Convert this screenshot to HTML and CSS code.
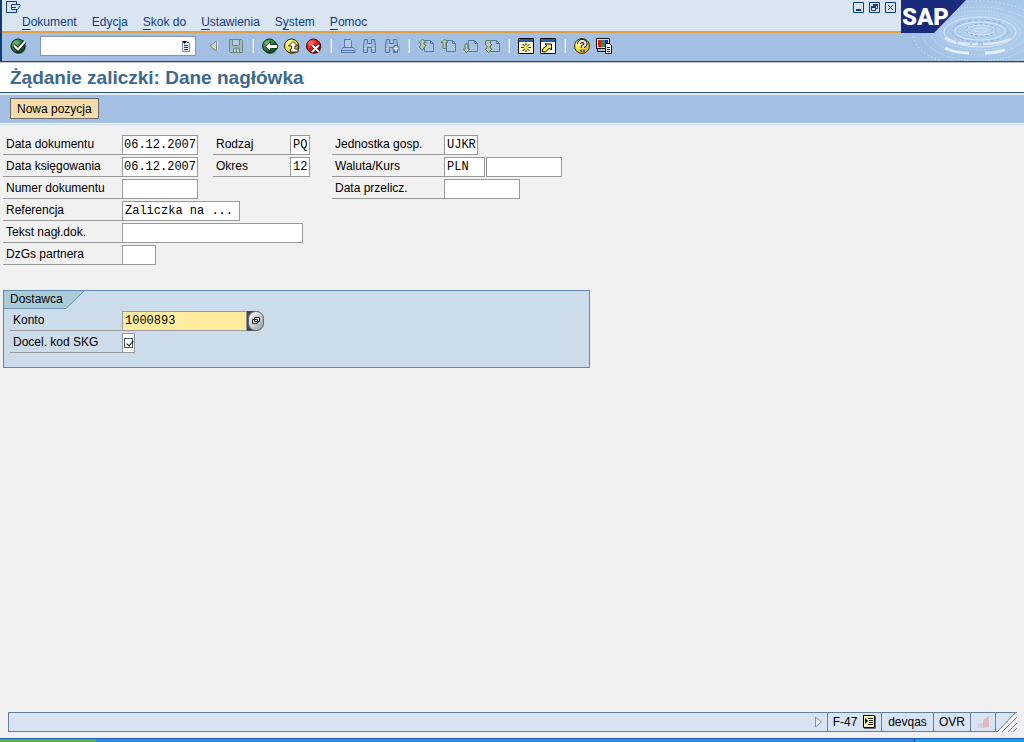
FILE: index.html
```
<!DOCTYPE html>
<html lang="pl">
<head>
<meta charset="utf-8">
<title>Żądanie zaliczki: Dane nagłówka</title>
<link rel="stylesheet" href="styles.css">
</head>
<body>
<svg class="defs" aria-hidden="true">
  <defs>
    <radialGradient id="green" cx=".35" cy=".3" r=".8"><stop offset="0" stop-color="#7dbb74"/><stop offset=".5" stop-color="#2a8040"/><stop offset="1" stop-color="#0d4020"/></radialGradient>
    <radialGradient id="yellow" cx=".35" cy=".3" r=".8"><stop offset="0" stop-color="#fffbb0"/><stop offset=".5" stop-color="#f8e23c"/><stop offset="1" stop-color="#e0a018"/></radialGradient>
    <radialGradient id="red" cx=".35" cy=".3" r=".8"><stop offset="0" stop-color="#ff7a70"/><stop offset=".5" stop-color="#e8141c"/><stop offset="1" stop-color="#b00010"/></radialGradient>
    <symbol id="page" viewBox="0 0 16 16"><path d="M6.500 2.500h6l3 3v8h-9z" fill="#a9c3e0" stroke="#587aa8"/><path d="M12.500 2.500v3h3" fill="none" stroke="#587aa8"/></symbol>
    <symbol id="binoculars" viewBox="0 0 16 16"><path d="M2.500 1.500h3v4h4v-4h3l1 6v7h-4v-5h-4v5h-4v-7z" fill="#9fbbe0" stroke="#5574aa"/><path d="M6 7.500h3M2 10.500h3M10 10.500h3" stroke="#c9daf0"/></symbol>
  </defs>
</svg>

<header class="top">
  <div class="bars">
    <div class="menubar">
      <div class="menu-left">
        <button class="sysmenu" aria-label="Menu okna"><svg width="16" height="12" viewBox="0 0 16 12"><path d="M10.500 3V.5H.5v11h10V9M14 3.500H5.500v5h6l3-4M5 6.500h5" fill="none" stroke="#0f3c80"/></svg></button>
        <nav class="menus">
          <button><u>D</u>okument</button><button>Edyc<u>j</u>a</button><button><u>S</u>kok do</button><button><u>U</u>stawienia</button><button>S<u>y</u>stem</button><button><u>P</u>omoc</button>
        </nav>
      </div>
      <div class="winbtns">
        <button aria-label="Minimalizuj"><svg width="11" height="11"><path d="M.5.5h10v10H.5z" fill="none" stroke="#0f3c80"/><path d="M3 8h5" stroke="#0f3c80" stroke-width="2"/></svg></button>
        <button aria-label="Przywróć"><svg width="11" height="11"><path d="M.5.5h10v10H.5zM4.500 4V2.500h4v4H7M2.500 4.500h4v4h-4z" fill="none" stroke="#0f3c80"/><path d="M4 3h5M2 5h5" stroke="#0f3c80" stroke-width="2"/></svg></button>
        <button aria-label="Zamknij"><svg width="11" height="11"><path d="M.5.5h10v10H.5zM3 3l5 5M8 3l-5 5" fill="none" stroke="#0f3c80"/></svg></button>
      </div>
    </div>
    <div class="toolbar">
      <button class="tool enter" aria-label="Enter"><svg width="18" height="18" viewBox="0 0 18 18"><circle cx="9" cy="10" r="7" fill="#5b7395"/><circle cx="8" cy="9" r="7" fill="url(#green)" stroke="#0a2c14"/><path d="M4 8.500l4 4 7-8" fill="none" stroke="#111" stroke-width="4"/><path d="M4 8.500l4 4 7-8" fill="none" stroke="#fff" stroke-width="2"/></svg></button>
      <div class="command">
        <input type="text" aria-label="Kod transakcji">
        <button aria-label="Historia"><svg width="10" height="12" viewBox="0 0 10 12"><path d="M1.500 2v9.500h7V3" fill="#e8eef8" stroke="#7d8eaa"/><path d="M1 1h5L3.500 4z" fill="#000"/><path d="M6 2.500h2M3 5.500h4M3 7.500h4M3 9.500h4" stroke="#20355c"/></svg></button>
      </div>
      <button class="tool" aria-label="Zwiń"><svg width="16" height="16"><path d="M10.500 3v10L4 8z" fill="#d5dac8" stroke="#7a8880"/><path d="M11.500 3v10" stroke="#fff"/></svg></button>
      <button class="tool" aria-label="Zapisz"><svg width="16" height="16"><path d="M1.500 1.500h12l1 1v12h-12l-1-1z" fill="#a5bcc5" stroke="#6a8480"/><path d="M4.500 1.500h7v6h-7zM5.500 14v-4h6v4M8.500 10v4" fill="#b7cbdc" stroke="#6a8480"/></svg></button>
      <span class="sep"></span>
      <button class="tool" aria-label="Wstecz"><svg width="16" height="16"><circle cx="8.500" cy="9" r="7" fill="#5b7395"/><circle cx="7.500" cy="8" r="7" fill="url(#green)" stroke="#0a2c14"/><path d="M3.500 8.500l5-5v3h7v4h-7v3z" fill="#fff" stroke="#123a1d"/></svg></button>
      <button class="tool" aria-label="Zakończ"><svg width="16" height="16"><circle cx="8.500" cy="9" r="7" fill="#66738b"/><circle cx="7.500" cy="8" r="7" fill="url(#yellow)" stroke="#2b220a"/><path d="M9 3.500l4.500 4.500H11v3h3v3H6.500v-3h1V8H4.500z" fill="#fff" stroke="#403000"/></svg></button>
      <button class="tool" aria-label="Anuluj"><svg width="16" height="16"><circle cx="8.500" cy="9" r="7" fill="#66738b"/><circle cx="7.500" cy="8" r="7" fill="url(#red)" stroke="#3c0306"/><path d="M6 7l7 7M13 7l-7 7" stroke="#40070a" stroke-width="3.500"/><path d="M6 7l7 7M13 7l-7 7" stroke="#fff" stroke-width="2"/></svg></button>
      <span class="sep"></span>
      <button class="tool" aria-label="Drukuj"><svg width="16" height="16"><path d="M4.500 1.500h6l1 1v7h-7z" fill="#b4cae8" stroke="#587aae"/><path d="M3 9.500h10l2 2v3H1.500v-3z" fill="#a9c2e4" stroke="#587aae"/><path d="M2 12.500h12" stroke="#587aae"/></svg></button>
      <button class="tool" aria-label="Szukaj"><svg width="16" height="16"><use href="#binoculars"/></svg></button>
      <button class="tool" aria-label="Szukaj dalej"><svg width="16" height="16"><use href="#binoculars"/><path d="M12 7v7M8.500 10.500h7" stroke="#5574aa" stroke-width="4"/><path d="M12 8v5M9.500 10.500h5" stroke="#dbe6f6" stroke-width="2"/></svg></button>
      <span class="sep"></span>
      <button class="tool" aria-label="Pierwsza strona"><svg width="16" height="16"><use href="#page"/><path d="M4.500 1l3.500 3.500H6V6l2 1-3.500 5L1 9l2-1.500V6L1 4.500z" fill="#b6c8b8" stroke="#64805f"/></svg></button>
      <button class="tool" aria-label="Poprzednia strona"><svg width="16" height="16"><use href="#page"/><path d="M4.500 1L8 4.500H6v6H3v-6H1z" fill="#b6c8b8" stroke="#64805f"/></svg></button>
      <button class="tool" aria-label="Następna strona"><svg width="16" height="16"><use href="#page"/><path d="M4.500 14.500L8 11H6V6H3v5H1z" fill="#b6c8b8" stroke="#64805f"/></svg></button>
      <button class="tool" aria-label="Ostatnia strona"><svg width="16" height="16"><use href="#page"/><path d="M2 2.500h5L6 5l2 2-2 1v2l2 1-3.500 3.500L1 11l2-1V8L1 6z" fill="#b6c8b8" stroke="#64805f"/></svg></button>
      <span class="sep"></span>
      <button class="tool" aria-label="Nowy tryb"><svg width="16" height="16"><path d="M.5.5h15v15H.5z" fill="#fffbd0" stroke="#000"/><path d="M1 1h14v3H1z" fill="#1f5fa5"/><path d="M8 5v9M3 9.500h10M4.500 6l7 7M11.500 6l-7 7" stroke="#222"/><path d="M8 7v5M5.500 9.500h5" stroke="#ffe82c" stroke-width="2"/></svg></button>
      <button class="tool" aria-label="Utwórz skrót"><svg width="16" height="16"><path d="M.5.5h15v15H.5z" fill="#fff" stroke="#000"/><path d="M1 1h14v3H1z" fill="#1f5fa5"/><path d="M2 13.500l1-3 4-3-2-1.500h6.500v6L9.500 10l-4 4z" fill="#fff04a" stroke="#000"/></svg></button>
      <span class="sep"></span>
      <button class="tool" aria-label="Pomoc"><svg width="16" height="16"><circle cx="8" cy="8" r="7.500" fill="url(#yellow)" stroke="#3b2d00"/><path d="M5 6c0-4 6.500-4 6.500 0C11.500 8 8.500 7.500 8.500 10M8.500 11.500v2.500" fill="none" stroke="#000" stroke-width="4"/><path d="M5 6c0-4 6.500-4 6.500 0C11.500 8 8.500 7.500 8.500 10M8.500 11.500v2" fill="none" stroke="#fff" stroke-width="2"/></svg></button>
      <button class="tool" aria-label="Dostosuj układ"><svg width="16" height="16"><path d="M.5.5h13v10H.5z" fill="#ddd" stroke="#111"/><path d="M2 2h3.500v7H2z" fill="#e01818"/><path d="M5 2h3.500v7H5z" fill="#10a040"/><path d="M8.500 2H12v7H8.500z" fill="#1830c8"/><path d="M1.500 11v2.500h8" fill="none" stroke="#111"/><path d="M9.500 5.500h4l2 2v8h-6z" fill="#fff" stroke="#000"/><path d="M11 9.500h3M11 11.500h3M11 13.500h3" stroke="#222"/></svg></button>
    </div>
  </div>
  <svg class="brand" width="123" height="61" viewBox="0 0 123 61" role="img" aria-label="SAP">
    <defs>
      <linearGradient id="water"><stop offset="0" stop-color="#a1bfe3"/><stop offset="1" stop-color="#a8c8ea"/></linearGradient>
      <radialGradient id="glow" cx=".65" cy=".5" r=".5"><stop offset="0" stop-color="#b8d3f0"/><stop offset="1" stop-color="#b8d3f0" stop-opacity="0"/></radialGradient>
    </defs>
    <rect width="123" height="61" fill="url(#water)"/>
    <rect width="123" height="61" fill="url(#glow)"/>
    <g fill="none" stroke="#dbe9f9">
      <ellipse cx="80" cy="30" rx="7" ry="2"/><ellipse cx="80" cy="30" rx="15" ry="5"/><ellipse cx="80" cy="30" rx="15" ry="6" stroke="#8fb0d8" stroke-dasharray="3 2"/>
      <ellipse cx="79" cy="31" rx="25" ry="9"/><ellipse cx="79" cy="31" rx="28" ry="11" stroke="#93b4db" stroke-dasharray="4 2"/>
      <ellipse cx="79" cy="32" rx="36" ry="15"/><ellipse cx="79" cy="32" rx="40" ry="18" stroke="#c9def4" stroke-dasharray="1 1"/>
      <ellipse cx="78" cy="33" rx="47" ry="22" stroke-dasharray="1 2"/><ellipse cx="78" cy="34" rx="56" ry="27" stroke-dasharray="1 2"/>
      <ellipse cx="78" cy="34" rx="66" ry="33" stroke-dasharray="1 3"/>
      <path d="M44 38q10 7 33 6" stroke-width="3" stroke-dasharray="12 2"/>
      <path d="M82 44q16 0 27-5" stroke-width="2"/>
      <path d="M44 48q10 5 24 5M84 53q10 0 20-3" stroke="#e4effb" stroke-width="3"/>
    </g>
    <path d="M0 0h65L33 33H0z" fill="#1b2b7c"/>
    <text class="logo" x="1" y="25">SAP</text>
  </svg>
</header>

<h1 class="title">Żądanie zaliczki: Dane nagłówka</h1>
<div class="appbar"><button>Nowa pozycja</button></div>

<main>
  <form class="header-form">
    <div class="field c1"><label for="bldat">Data dokumentu</label><input id="bldat" class="w-date" value="06.12.2007"></div>
    <div class="field c2"><label for="blart">Rodzaj</label><input id="blart" class="w-2" value="PQ"></div>
    <div class="field c3"><label for="bukrs">Jednostka gosp.</label><input id="bukrs" class="w-4" value="UJKR"></div>
    <div class="field c1"><label for="budat">Data księgowania</label><input id="budat" class="w-date" value="06.12.2007"></div>
    <div class="field c2"><label for="monat">Okres</label><input id="monat" class="w-2" value="12"></div>
    <div class="field c3"><label for="waers">Waluta/Kurs</label><input id="waers" class="w-5" value="PLN"><input class="w-date" aria-label="Kurs"></div>
    <div class="field c1"><label for="belnr">Numer dokumentu</label><input id="belnr" class="w-date"></div>
    <div class="field c3"><label for="wwert">Data przelicz.</label><input id="wwert" class="w-date"></div>
    <div class="field c1"><label for="xblnr">Referencja</label><input id="xblnr" class="w-ref" value="Zaliczka na ..."></div>
    <div class="field c1"><label for="bktxt">Tekst nagł.dok.</label><input id="bktxt" class="w-text"></div>
    <div class="field c1"><label for="pargb">DzGs partnera</label><input id="pargb" class="w-4"></div>
  </form>

  <section class="group">
    <h2><svg width="80" height="18" viewBox="0 0 80 18" aria-hidden="true"><path d="M0 0h80L62 17.500H0z" fill="#a9ccd8"/><path d="M80 0L62 17.500H0" fill="none" stroke="#6e94b0"/></svg><span>Dostawca</span></h2>
    <div class="group-rows">
      <div class="field"><label for="konto">Konto</label><input id="konto" class="w-acc" value="1000893"><button type="button" class="match" aria-label="Lista wartości"><svg width="17" height="20" viewBox="0 0 17 20"><defs><linearGradient id="knob" x2="1" y2="1"><stop offset="0" stop-color="#fff"/><stop offset="1" stop-color="#949aa2"/></linearGradient></defs><path d="M0 0h9v20H0z" fill="#404850"/><rect x="1.500" y=".5" width="15" height="19" rx="7" fill="url(#knob)" stroke="#596069"/><path d="M7.500 6.500h5v4h-5zM5.500 8.500h5v4h-5z" fill="#eef1f5" stroke="#222"/></svg></button></div>
      <div class="field"><label for="umskz">Docel. kod SKG</label><span class="check"><input id="umskz" type="checkbox" checked></span></div>
    </div>
  </section>
</main>

<footer class="status">
  <div class="message"><svg width="9" height="12"><path d="M1.500 1v10l6-5z" fill="#f4f8fd" stroke="#7d91ab"/></svg></div>
  <div class="cell tcode">F-47 <button aria-label="Informacje o systemie"><svg width="13" height="14"><path d="M.5.5h11v12H.5z" fill="#fbf7b4" stroke="#000"/><path d="M2 3l3 3-3 3z"/><path d="M5 3.500h5M6 5.500h4M6 7.500h4M5 9.500h5" stroke="#222"/><path d="M12.500 1v12.500H1" fill="none" stroke="#667"/></svg></button></div>
  <div class="cell server">devqas</div>
  <div class="cell mode">OVR</div>
  <div class="cell traffic"><svg width="13" height="14"><path d="M1 9l5-1v5H1z" fill="#dccbd8"/><path d="M6 5l6-4v11l-6 1z" fill="#e3b8c0"/></svg></div>
  <svg class="grip" width="21" height="20"><path d="M0 0h21L1 20H0z" fill="#d8e4f3"/><path d="M0 .5h21M0 19.500h1" stroke="#667d9c"/><path d="M20 0L1 20M21 5L6 20M21 11l-9 9M21 16l-4 4" stroke="#77889c" fill="none"/><path d="M21 2L3 20M21 8L9 20M21 13l-7 7" stroke="#fff" fill="none"/></svg>
</footer>
<div class="taskbar"><span class="start"></span><span class="tasks"></span><span class="tray"></span></div>
</body>
</html>
```
FILE: styles.css
```
* { box-sizing: border-box; }
body {
  margin: 0;
  min-height: 100vh;
  display: flex;
  flex-direction: column;
  background: #f1f1f1;
  color: #000;
  font: 12px/18px "Liberation Sans", Arial, sans-serif;
}
button {
  font: inherit;
  color: inherit;
  padding: 0;
  border: 0;
  background: none;
}
svg { display: block; flex: none; }
.defs { position: absolute; width: 0; height: 0; }

.top {
  display: flex;
  background: #a3bfe3;
  border-bottom: 1px solid #33425a;
}
.bars {
  flex: 1;
  border-left: 2px solid #0f3c6c;
}
.menubar {
  display: flex;
  justify-content: space-between;
  height: 33px;
  background: #dae5f2;
  border-bottom: 2px solid #dfa143;
}
.menu-left { padding: 1px 0 0 4px; }
.sysmenu { display: block; }
.menus {
  display: flex;
  gap: 15px;
  padding-left: 16px;
  color: #0f3c80;
}
.menus button { line-height: 18px; }
.menus u { text-underline-offset: 3px; }
.winbtns {
  display: flex;
  align-items: flex-start;
  gap: 5px;
  padding: 2px 5px 0 0;
}
.toolbar {
  display: flex;
  align-items: center;
  height: 28px;
  padding: 0 0 2px 6px;
}
.tool {
  display: flex;
  justify-content: center;
  width: 22px;
}
.command {
  display: flex;
  align-items: center;
  width: 156px;
  height: 20px;
  margin: 0 7px 0 10px;
  padding-right: 4px;
  background: #fff;
  border: 1px solid #8196b5;
}
.command input {
  flex: 1;
  min-width: 0;
  height: 18px;
  border: 0;
  background: none;
}
.sep {
  width: 2px;
  height: 14px;
  margin: 0 5px;
  background: #f4f7fb;
  border-left: 1px solid #c3d2e6;
}
.logo {
  font: 900 24px Roboto, sans-serif;
  fill: #fff;
}

.title {
  margin: 0;
  padding: 0 10px;
  color: #3d6890;
  background: #fff;
  border-top: 1px solid #c8c8cc;
  border-bottom: 1px solid #2e5570;
  font-size: 19px;
  line-height: 29px;
}
.appbar {
  padding: 3px 10px 4px;
  background: #a3bfe3;
  border-top: 2px solid #e2ecf7;
  border-bottom: 1px solid #fff;
  box-shadow: 0 1px #c5d7ec;
}
.appbar button {
  display: block;
  height: 21px;
  padding: 0 6px;
  background: #f3dcaa;
  border: 1px solid #6c6a66;
}

main { flex: 1; padding: 11px 3px; }
.header-form {
  display: grid;
  grid-template-columns: 210px 119px 1fr;
  row-gap: 2px;
}
.c1 { grid-column: 1; }
.c2 { grid-column: 2; }
.c3 { grid-column: 3; }
.field { display: flex; height: 20px; }
.field label {
  flex: none;
  width: 119px;
  padding-left: 3px;
  border-bottom: 1px solid #999;
  line-height: 19px;
  white-space: nowrap;
}
.c2 label { width: 77px; }
.c3 label { width: 112px; }
.field input {
  flex: none;
  height: 20px;
  margin: 0;
  padding: 0 0 0 2px;
  border: 1px solid #999;
  border-radius: 0;
  background: #fff;
  color: #000;
  font: 12px "Liberation Mono", "Courier New", monospace;
}
.field input + input { margin-left: 1px; }
.field .w-date { width: 76px; padding-left: 1px; }
.field .w-2 { width: 20px; }
.field .w-4 { width: 34px; }
.field .w-5 { width: 41px; }
.field .w-ref { width: 118px; }
.field .w-text { width: 181px; }
.field .w-acc { width: 125px; background: #ffec9e; }

.group {
  max-width: 587px;
  min-height: 78px;
  margin-top: 25px;
  background: #ccdcea;
  border: 1px solid #6589ad;
}
.group h2 {
  display: grid;
  margin: 0;
  font-size: 12px;
  font-weight: normal;
  line-height: 16px;
}
.group h2 > * { grid-area: 1 / 1; }
.group h2 span { padding-left: 6px; }
.group-rows {
  display: grid;
  row-gap: 2px;
  padding: 2px 6px;
}
.group-rows .field label { width: 112px; }
.check {
  display: flex;
  align-items: center;
  justify-content: center;
  width: 13px;
  background: #fff;
  border: 1px solid #999;
}
.field .check input {
  appearance: none;
  width: 9px;
  height: 10px;
  padding: 0;
  border: 1px solid #3d5466;
}
.check input:checked::before {
  content: "";
  display: block;
  width: 3px;
  height: 6px;
  margin: 0 0 0 3px;
  border: solid #111;
  border-width: 0 1px 1px 0;
  transform: rotate(40deg);
}

.status {
  display: flex;
  height: 20px;
  margin: 0 7px 6px 8px;
}
.message {
  flex: 1;
  display: flex;
  align-items: center;
  justify-content: flex-end;
  padding-right: 4px;
  background: #d8e4f3;
  border: 1px solid #667d9c;
}
.cell {
  display: flex;
  align-items: center;
  justify-content: center;
  gap: 6px;
  background: #d8e4f3;
  border: solid #667d9c;
  border-width: 1px 1px 1px 0;
}
.tcode { width: 54px; }
.server { width: 52px; }
.mode { width: 37px; }
.traffic { width: 25px; }
.taskbar {
  display: flex;
  height: 4px;
  background: #3b86e4;
  border-top: 1px solid #1f5cc0;
}
.start { width: 96px; background: #5fae57; }
.tasks { flex: 1; }
.tray { width: 110px; background: #18a0ee; border-left: 1px solid #0c4fa0; }
```
